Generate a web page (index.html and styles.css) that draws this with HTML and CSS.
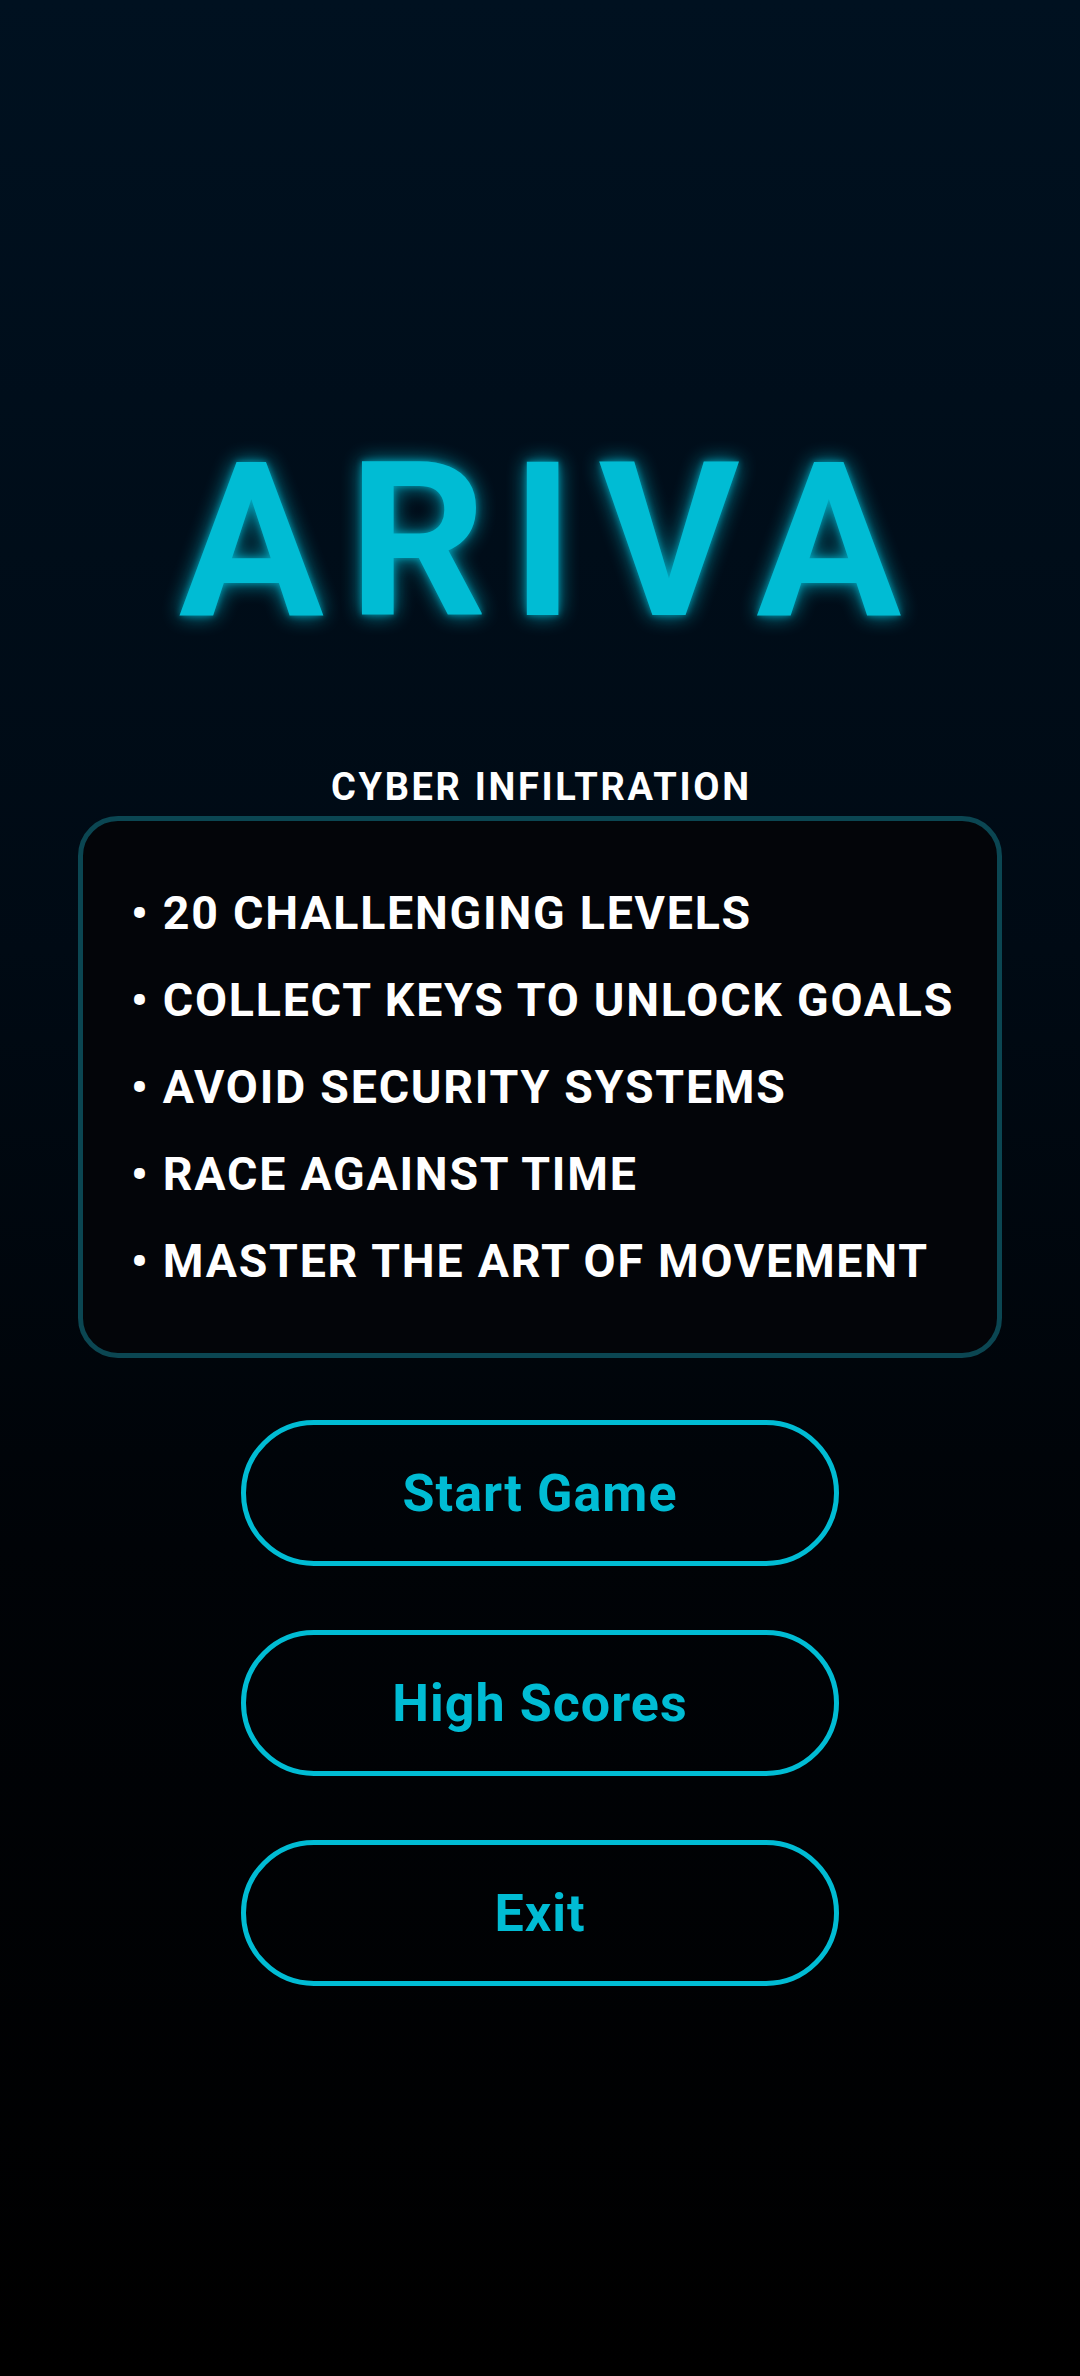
FILE: index.html
```html
<!DOCTYPE html>
<html lang="en">
<head>
<meta charset="utf-8">
<title>ARIVA</title>
<link rel="stylesheet" href="styles.css">
</head>
<body>
<main class="screen">
  <h1 class="title">ARIVA</h1>
  <p class="subtitle">CYBER INFILTRATION</p>
  <ul class="features">
    <li>• 20 CHALLENGING LEVELS</li>
    <li>• COLLECT KEYS TO UNLOCK GOALS</li>
    <li>• AVOID SECURITY SYSTEMS</li>
    <li>• RACE AGAINST TIME</li>
    <li>• MASTER THE ART OF MOVEMENT</li>
  </ul>
  <div class="menu">
    <button class="btn">Start Game</button>
    <button class="btn">High Scores</button>
    <button class="btn">Exit</button>
  </div>
</main>
</body>
</html>
```
FILE: styles.css
```css
html, body {
  margin: 0;
  padding: 0;
}
body {
  width: 1080px;
  min-height: 2376px;
  background: linear-gradient(to bottom, #001120 0%, #000a14 40%, #000307 65%, #000000 100%);
  font-family: Roboto, "Noto Sans", sans-serif;
  color: #ffffff;
}
.screen {
  display: flex;
  flex-direction: column;
  align-items: center;
}
.title {
  margin: 434px 0 0 0;
  font-size: 216px;
  line-height: 1;
  font-weight: 700;
  letter-spacing: 0.113em;
  padding-left: 0.113em;
  color: #00bcd4;
  text-shadow: 0 0 20px rgba(0, 188, 212, 0.8), 0 0 6px rgba(0, 188, 212, 0.6);
}
.subtitle {
  margin: 118px 0 0 0;
  font-size: 38px;
  line-height: 1;
  font-weight: 700;
  letter-spacing: 0.07em;
  padding-left: 0.07em;
  color: #ffffff;
}
.features {
  box-sizing: border-box;
  list-style: none;
  margin: 10px 0 0 0;
  width: 924px;
  padding: 49px 0 48px 48px;
  border: 5px solid #0b4652;
  border-radius: 40px;
  background: #030509;
}
.features li {
  font-size: 46.5px;
  line-height: 87px;
  font-weight: 700;
  letter-spacing: 0.038em;
  color: #ffffff;
  white-space: nowrap;
}
.menu {
  display: flex;
  flex-direction: column;
  gap: 64px;
  margin-top: 62px;
}
.btn {
  box-sizing: border-box;
  width: 598px;
  height: 146px;
  border: 5px solid #00bcd4;
  border-radius: 73px;
  background: transparent;
  color: #00bcd4;
  font-family: Roboto, "Noto Sans", sans-serif;
  font-size: 52px;
  font-weight: 700;
  letter-spacing: 0.02em;
  padding: 0;
}
```
